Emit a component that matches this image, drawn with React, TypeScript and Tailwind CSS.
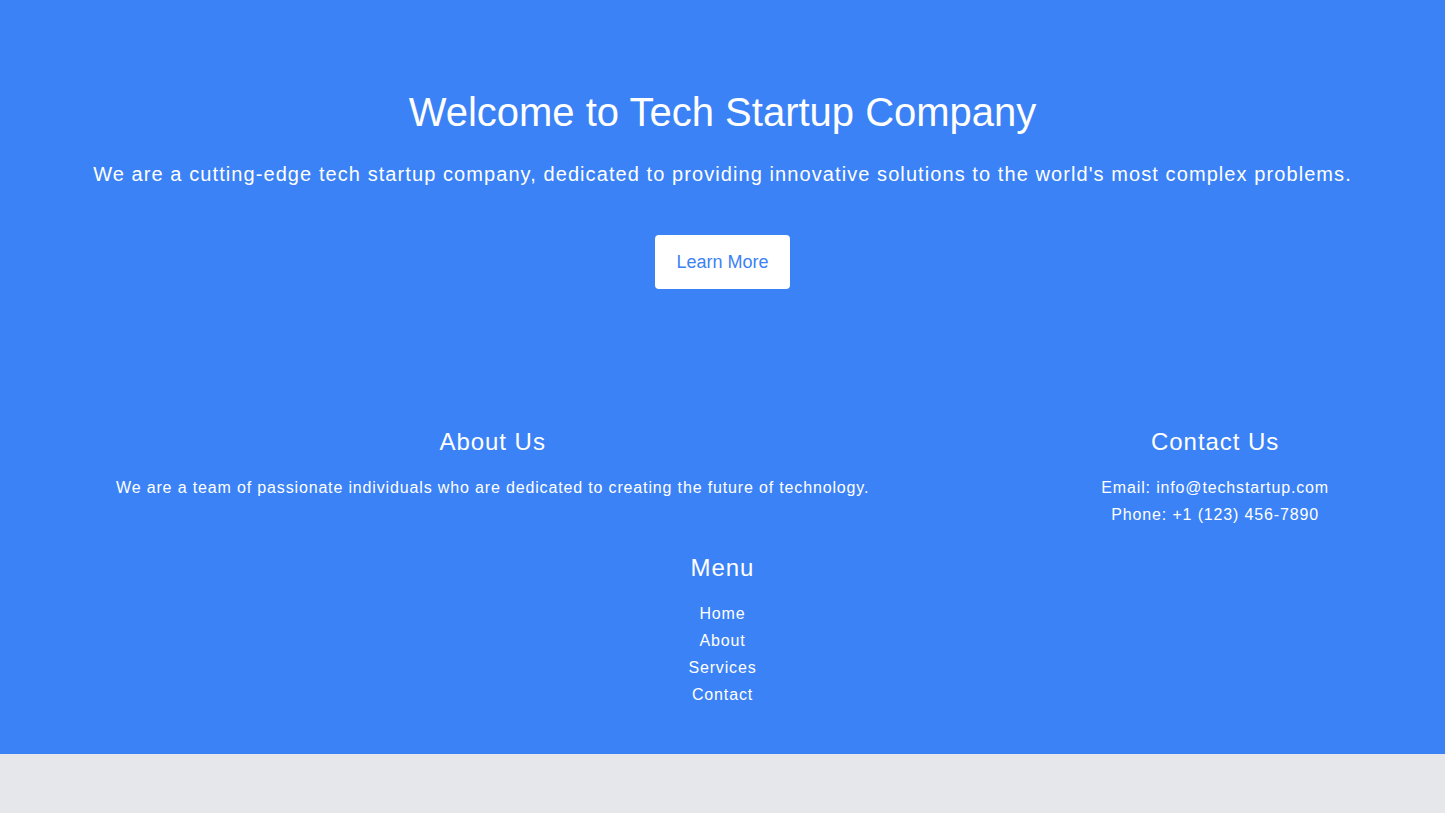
export default function App() {
  return (
    <div className="min-h-screen bg-[#e5e7eb] font-['Liberation_Sans',Arial,sans-serif]">
      <div className="bg-[#3b82f6] text-white">
        <section className="px-4 pt-[88px] pb-[137px] text-center">
          <h1 className="mb-6 text-[40px] leading-[48px]">Welcome to Tech Startup Company</h1>
          <p className="mb-[47px] text-xl leading-[28px] tracking-[0.054em]">
            We are a cutting-edge tech startup company, dedicated to providing innovative solutions to the world's most complex problems.
          </p>
          <a
            href="#"
            className="inline-flex h-[54px] w-[135px] items-center justify-center rounded bg-white text-lg text-[#3b82f6]"
          >
            Learn More
          </a>
        </section>

        <footer className="pb-[46px] text-center">
          <div className="flex justify-around">
            <div>
              <h2 className="mb-4 text-2xl leading-8 tracking-[0.04em]">About Us</h2>
              <p className="text-base leading-[27px] tracking-[0.053em]">
                We are a team of passionate individuals who are dedicated to creating the future of technology.
              </p>
            </div>
            <div>
              <h2 className="mb-4 text-2xl leading-8 tracking-[0.04em]">Contact Us</h2>
              <p className="text-base leading-[27px] tracking-[0.053em]">Email: info@techstartup.com</p>
              <p className="text-base leading-[27px] tracking-[0.053em]">Phone: +1 (123) 456-7890</p>
            </div>
          </div>
          <div className="mt-6">
            <h2 className="mb-4 text-2xl leading-8 tracking-[0.04em]">Menu</h2>
            <ul className="text-base leading-[27px] tracking-[0.053em]">
              <li><a href="#">Home</a></li>
              <li><a href="#">About</a></li>
              <li><a href="#">Services</a></li>
              <li><a href="#">Contact</a></li>
            </ul>
          </div>
        </footer>
      </div>
    </div>
  )
}
